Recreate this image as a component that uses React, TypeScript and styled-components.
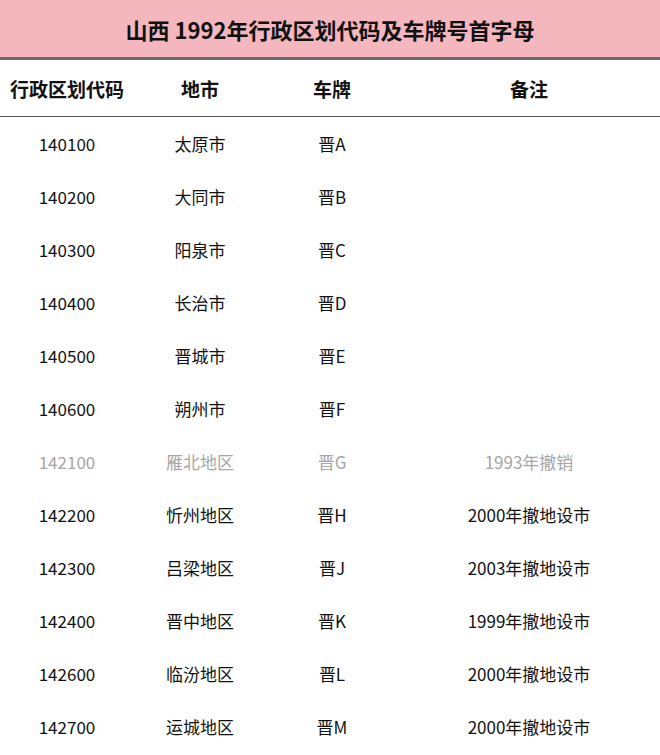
import React from 'react';
import styled, { createGlobalStyle } from 'styled-components';

const GlobalStyle = createGlobalStyle`
  html, body {
    margin: 0;
    padding: 0;
    background: #ffffff;
  }
  body {
    font-family: "Noto Sans CJK SC", "Noto Sans", sans-serif;
    color: #111111;
  }
`;

type Row = {
  code: string;
  city: string;
  plate: string;
  note?: string;
  muted?: boolean;
};

const rows: Row[] = [
  { code: '140100', city: '太原市', plate: '晋A' },
  { code: '140200', city: '大同市', plate: '晋B' },
  { code: '140300', city: '阳泉市', plate: '晋C' },
  { code: '140400', city: '长治市', plate: '晋D' },
  { code: '140500', city: '晋城市', plate: '晋E' },
  { code: '140600', city: '朔州市', plate: '晋F' },
  { code: '142100', city: '雁北地区', plate: '晋G', note: '1993年撤销', muted: true },
  { code: '142200', city: '忻州地区', plate: '晋H', note: '2000年撤地设市' },
  { code: '142300', city: '吕梁地区', plate: '晋J', note: '2003年撤地设市' },
  { code: '142400', city: '晋中地区', plate: '晋K', note: '1999年撤地设市' },
  { code: '142600', city: '临汾地区', plate: '晋L', note: '2000年撤地设市' },
  { code: '142700', city: '运城地区', plate: '晋M', note: '2000年撤地设市' },
];

const columns = '134px 132px 132px 1fr';

export default function App() {
  return (
    <Page>
      <GlobalStyle />
      <TitleBar>山西 1992年行政区划代码及车牌号首字母</TitleBar>
      <HeaderRow>
        <HeadCell>行政区划代码</HeadCell>
        <HeadCell>地市</HeadCell>
        <HeadCell>车牌</HeadCell>
        <HeadCell>备注</HeadCell>
      </HeaderRow>
      <Body>
        {rows.map((r) => (
          <DataRow key={r.code} $muted={r.muted}>
            <Cell>{r.code}</Cell>
            <Cell>{r.city}</Cell>
            <Cell>{r.plate}</Cell>
            <Cell>{r.note ?? ''}</Cell>
          </DataRow>
        ))}
      </Body>
    </Page>
  );
}

const Page = styled.div`
  width: 660px;
  height: 755px;
  overflow: hidden;
  display: flex;
  flex-direction: column;
`;

const TitleBar = styled.div`
  height: 57px;
  background: #f4b7be;
  display: flex;
  align-items: center;
  justify-content: center;
  font-size: 22px;
  font-weight: 700;
  color: #111111;
  border-bottom: 3px solid #6a6a6a;
  box-sizing: content-box;
`;

const HeaderRow = styled.div`
  display: grid;
  grid-template-columns: ${columns};
  height: 56px;
  align-items: center;
  border-bottom: 1px solid #555555;
`;

const HeadCell = styled.div`
  text-align: center;
  font-size: 19px;
  font-weight: 700;
  color: #111111;
`;

const Body = styled.div`
  display: flex;
  flex-direction: column;
`;

const DataRow = styled.div<{ $muted?: boolean }>`
  display: grid;
  grid-template-columns: ${columns};
  height: 53px;
  align-items: center;
  color: ${(p) => (p.$muted ? '#a6a6a6' : '#111111')};
`;

const Cell = styled.div`
  text-align: center;
  font-size: 17px;
`;
